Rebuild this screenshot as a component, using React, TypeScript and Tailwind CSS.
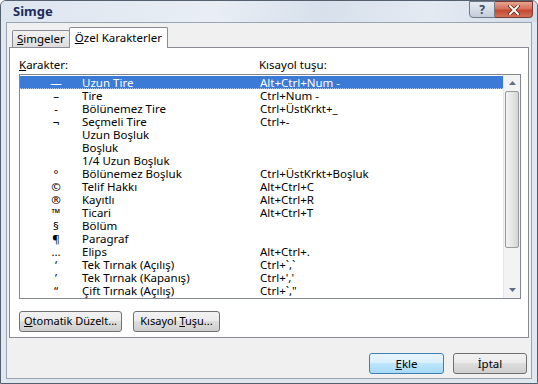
const rows: [string, string, string][] = [
  ["—", "Uzun Tire", "Alt+Ctrl+Num -"],
  ["–", "Tire", "Ctrl+Num -"],
  ["-", "Bölünemez Tire", "Ctrl+ÜstKrkt+_"],
  ["¬", "Seçmeli Tire", "Ctrl+-"],
  ["", "Uzun Boşluk", ""],
  ["", "Boşluk", ""],
  ["", "1/4 Uzun Boşluk", ""],
  ["°", "Bölünemez Boşluk", "Ctrl+ÜstKrkt+Boşluk"],
  ["©", "Telif Hakkı", "Alt+Ctrl+C"],
  ["®", "Kayıtlı", "Alt+Ctrl+R"],
  ["™", "Ticari", "Alt+Ctrl+T"],
  ["§", "Bölüm", ""],
  ["¶", "Paragraf", ""],
  ["…", "Elips", "Alt+Ctrl+."],
  ["‘", "Tek Tırnak (Açılış)", "Ctrl+`,`"],
  ["’", "Tek Tırnak (Kapanış)", "Ctrl+','"],
  ["“", "Çift Tırnak (Açılış)", "Ctrl+`,\""],
];

function Btn(props: { children: React.ReactNode; w: string; primary?: boolean }) {
  return (
    <div
      className={
        "h-[21px] flex items-center justify-center rounded-[3px] border " +
        props.w +
        (props.primary
          ? " border-[#3c7fb1] bg-[linear-gradient(#eaf6fd_0%,#d9f0fc_45%,#bee6fd_50%,#a7d9f5_100%)]"
          : " border-[#707070] bg-[linear-gradient(#f2f2f2_0%,#ebebeb_45%,#dddddd_50%,#cfcfcf_100%)]")
      }
    >
      {props.children}
    </div>
  );
}

export default function App() {
  return (
    <div
      className="w-[538px] h-[384px] bg-[#e1e7ee] border border-[#55606e] rounded-t-[6px] flex flex-col text-[11.5px] text-black overflow-hidden"
      style={{ fontFamily: '"Noto Sans", "Open Sans", sans-serif' }}
    >
      {/* title bar */}
      <div className="h-[21px] flex items-start bg-[linear-gradient(100deg,#dde5ef_0%,#e9eef5_40%,#d7e0eb_60%,#e4eaf2_80%,#d3dde9_100%)]">
        <div className="pl-[12px] pt-[1px] font-bold text-[13px] text-[#1d2c58]">Simge</div>
        <div className="ml-auto mr-[4px] flex">
          <div className="w-[26px] h-[17px] border border-[#6d7a8c] rounded-bl-[4px] bg-[linear-gradient(#e7ecf2,#c3cdd9)] flex items-center justify-center text-[12px] text-[#3a4a60] font-bold leading-none">
            ?
          </div>
          <div className="w-[38px] h-[17px] border border-l-0 border-[#7a3a30] rounded-br-[4px] bg-[linear-gradient(#e8a493_0%,#d7705a_45%,#c44a30_55%,#d2705a_100%)] flex items-center justify-center">
            <svg width="12" height="10" viewBox="0 0 12 10">
              <path d="M2 1 L10 9 M10 1 L2 9" stroke="#5a2016" strokeWidth="3.4" strokeLinecap="square" />
              <path d="M2 1 L10 9 M10 1 L2 9" stroke="#ffffff" strokeWidth="2" strokeLinecap="square" />
            </svg>
          </div>
        </div>
      </div>

      {/* client area */}
      <div className="flex-1 mx-[5px] mb-[4px] border border-[#98a4b2] bg-[#f0f0f0] flex flex-col">
        <div className="px-[2px] pt-[3px]">
          {/* tabs */}
          <div className="flex items-end h-[21px] pl-[3px] relative z-10">
            <div className="h-[17px] px-[4px] border border-b-0 border-[#898c95] rounded-t-[2px] bg-[linear-gradient(#f2f2f2,#dcdcdc)] flex items-center">
              <span><u>S</u>imgeler</span>
            </div>
            <div className="h-[21px] -mb-px px-[5px] border border-b-0 border-[#898c95] rounded-t-[2px] bg-white flex items-center -ml-px">
              <span><u>Ö</u>zel Karakterler</span>
            </div>
          </div>
          {/* panel */}
          <div className="h-[291px] border border-[#898c95] bg-white pl-[9px] pr-[7px] pt-[8px]">
            <div className="flex h-[17px] items-center">
              <span className="w-[240px]"><u>K</u>arakter:</span>
              <span>Kısayol tuşu:</span>
            </div>
            <div className="mt-[1px] h-[225px] border border-[#828790] flex">
              <div className="flex-1 pt-px">
                {rows.map((r, i) => (
                  <div
                    key={i}
                    className={
                      "flex h-[13px] items-center leading-[13px] " +
                      (i === 0 ? "bg-[#3b7ad6] text-white border-b border-dotted border-[#a9c9ee]" : "")
                    }
                  >
                    <span className="w-[62px] text-center pl-[10px]">{r[0]}</span>
                    <span className="w-[178px]">{r[1]}</span>
                    <span>{r[2]}</span>
                  </div>
                ))}
              </div>
              <div className="w-[17px] bg-[#f3f3f3] flex flex-col border-l border-[#e6e6e6]">
                <div className="h-[16px] flex items-center justify-center">
                  <svg width="7" height="4" viewBox="0 0 7 4">
                    <path d="M0 4 L3.5 0 L7 4 Z" fill="#5d6f86" />
                  </svg>
                </div>
                <div className="h-[157px] mx-px border border-[#9a9a9a] rounded-[2px] bg-[linear-gradient(90deg,#f3f3f3,#e6e6e6_50%,#d4d4d4)]" />
                <div className="flex-1" />
                <div className="h-[16px] flex items-center justify-center">
                  <svg width="7" height="4" viewBox="0 0 7 4">
                    <path d="M0 0 L7 0 L3.5 4 Z" fill="#5d6f86" />
                  </svg>
                </div>
              </div>
            </div>
            <div className="flex gap-[11px] mt-[12px] text-[11px]">
              <Btn w="w-[103px]">
                <span><u>O</u>tomatik Düzelt...</span>
              </Btn>
              <Btn w="w-[87px]">
                <span>Kısayol <u>T</u>uşu...</span>
              </Btn>
            </div>
          </div>
        </div>
        <div className="flex justify-end gap-[9px] pr-[4px] mt-[15px]">
          <Btn w="w-[75px]" primary>
            <span><u>E</u>kle</span>
          </Btn>
          <Btn w="w-[74px]">
            <span>İptal</span>
          </Btn>
        </div>
      </div>
    </div>
  );
}
